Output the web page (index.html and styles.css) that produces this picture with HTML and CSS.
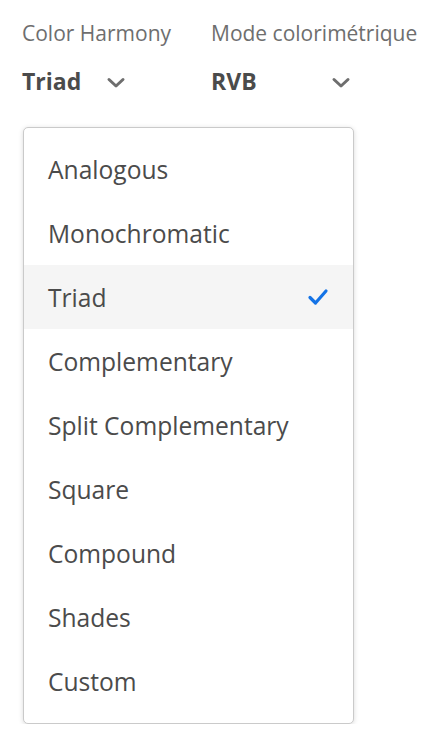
FILE: index.html
```html
<!DOCTYPE html>
<html lang="en">
<head>
<meta charset="utf-8">
<link rel="stylesheet" href="styles.css">
</head>
<body>
<div class="fields">
  <div class="field field-harmony">
    <div class="label">Color Harmony</div>
    <div class="picker picker-harmony">
      <span class="value">Triad</span>
      <svg class="chev" width="20" height="12" viewBox="0 0 20 12"><path d="M3 2.5 L10 9 L17 2.5" fill="none" stroke="#6e6e6e" stroke-width="3" stroke-linecap="round" stroke-linejoin="round"/></svg>
    </div>
  </div>
  <div class="field field-mode">
    <div class="label">Mode colorimétrique</div>
    <div class="picker picker-mode">
      <span class="value">RVB</span>
      <svg class="chev" width="20" height="12" viewBox="0 0 20 12"><path d="M3 2.5 L10 9 L17 2.5" fill="none" stroke="#6e6e6e" stroke-width="3" stroke-linecap="round" stroke-linejoin="round"/></svg>
    </div>
  </div>
</div>
<div class="menu">
  <div class="item">Analogous</div>
  <div class="item">Monochromatic</div>
  <div class="item selected">Triad
    <svg class="check" width="22" height="20" viewBox="0 0 22 20"><path d="M3 10.5 L8.5 16 L19 4" fill="none" stroke="#1473e6" stroke-width="3.2" stroke-linecap="round" stroke-linejoin="round"/></svg>
  </div>
  <div class="item">Complementary</div>
  <div class="item">Split Complementary</div>
  <div class="item">Square</div>
  <div class="item">Compound</div>
  <div class="item">Shades</div>
  <div class="item">Custom</div>
</div>
</body>
</html>
```

FILE: styles.css
```css
html, body {
  margin: 0;
  padding: 0;
  background: #ffffff;
}
body {
  font-family: "Open Sans", "Noto Sans", sans-serif;
  color: #4b4b4b;
  padding: 20px 0 0 22px;
}
.fields {
  display: flex;
}
.field-harmony {
  width: 189px;
}
.label {
  font-size: 21px;
  line-height: 26px;
  color: #6e6e6e;
}
.picker {
  display: flex;
  align-items: center;
  justify-content: space-between;
  height: 44px;
  margin-top: 13px;
}
.picker-harmony {
  width: 104px;
}
.picker-mode {
  width: 140px;
}
.value {
  font-size: 23px;
  font-weight: 700;
  color: #4b4b4b;
}
.chev {
  display: block;
  margin-top: 3px;
}
.menu {
  margin-top: 24px;
  margin-left: 1px;
  width: 329px;
  border: 1px solid #cacaca;
  border-radius: 5px;
  padding: 9px 0 10px;
  box-shadow: 0 1px 5px rgba(0, 0, 0, 0.15);
  background: #fff;
}
.item {
  height: 64px;
  display: flex;
  align-items: center;
  justify-content: space-between;
  padding: 0 24px 0 24px;
  font-size: 24.6px;
  color: #4b4b4b;
}
.item.selected {
  background: #f5f5f5;
}
.check {
  display: block;
}
```
